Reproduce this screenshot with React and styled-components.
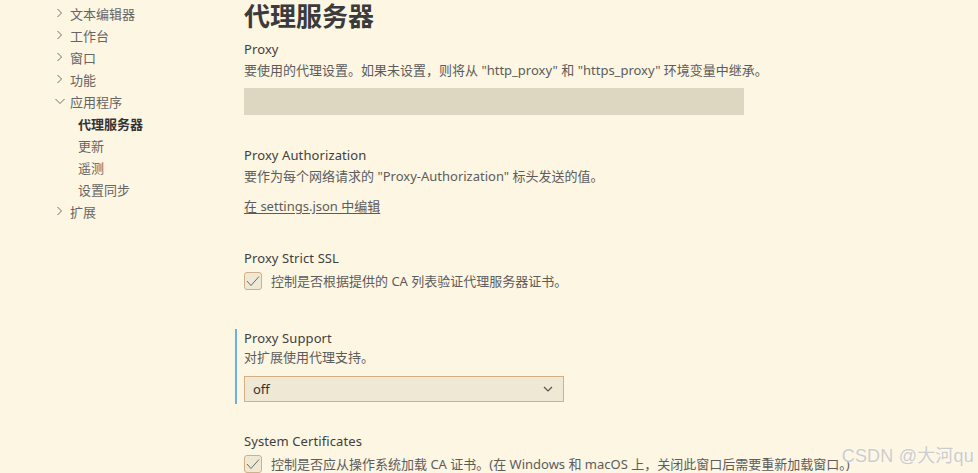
import React from 'react';
import styled, { createGlobalStyle } from 'styled-components';

const GlobalStyle = createGlobalStyle`
  html, body {
    margin: 0;
    padding: 0;
    background: #fdf6e3;
  }
  body {
    font-family: "Noto Sans", "Noto Sans CJK SC", sans-serif;
    font-size: 13px;
    color: #3f3f3f;
  }
`;

const Page = styled.div`
  position: relative;
  display: flex;
  width: 978px;
  height: 473px;
  overflow: hidden;
  background: #fdf6e3;
`;

const Sidebar = styled.nav`
  width: 235px;
  flex-shrink: 0;
  padding-top: 2px;
`;

const TreeRow = styled.div`
  display: flex;
  align-items: center;
  height: 22px;
  padding-left: ${p => (p.$child ? '78px' : '55px')};
  color: ${p => (p.$active ? '#333333' : '#656565')};
  font-weight: ${p => (p.$active ? 700 : 400)};
  font-size: 13px;
  white-space: nowrap;
`;

const Twistie = styled.svg`
  width: 10px;
  height: 10px;
  margin-right: 5px;
  flex-shrink: 0;
`;

const Main = styled.main`
  flex: 1;
  display: flex;
  flex-direction: column;
`;

const Heading = styled.h1`
  margin: 0;
  padding-left: 9px;
  font-size: 26px;
  line-height: 30px;
  font-weight: 700;
  color: #3b3b3b;
  font-family: "Noto Sans CJK SC", sans-serif;
`;

const Setting = styled.section`
  display: flex;
  flex-direction: column;
  align-items: flex-start;
  margin-top: ${p => p.$gap}px;
  padding: 0 0 ${p => (p.$focused ? 2 : 0)}px 7px;
  border-left: 2px solid ${p => (p.$focused ? '#6aafe6' : 'transparent')};
`;

const Label = styled.div`
  line-height: 18px;
  color: #3f3f3f;
  letter-spacing: 0.1px;
`;

const Description = styled.div`
  margin-top: ${p => p.$gap ?? 3}px;
  line-height: 18px;
  color: #5c5c5c;
  white-space: nowrap;
`;

const TextInput = styled.div`
  margin-top: 9px;
  width: 500px;
  height: 27px;
  background: #ddd6c1;
`;

const EditLink = styled.a`
  margin-top: 12px;
  line-height: 18px;
  color: #5c5c5c;
  text-decoration: underline;
  text-underline-offset: 2px;
  cursor: pointer;
`;

const CheckRow = styled.label`
  display: flex;
  align-items: center;
  gap: 9px;
  margin-top: 4px;
  color: #5c5c5c;
  white-space: nowrap;
`;

const CheckBox = styled.span`
  display: flex;
  align-items: center;
  justify-content: center;
  width: 16px;
  height: 16px;
  border: 1px solid #d3af86;
  border-radius: 3px;
  background: #eee8d5;
  flex-shrink: 0;
`;

const Select = styled.div`
  margin-top: 10px;
  display: flex;
  align-items: center;
  justify-content: space-between;
  box-sizing: border-box;
  width: 320px;
  height: 26px;
  padding: 0 10px 0 8px;
  border: 1px solid #d3af86;
  background: #eee8d5;
  color: #333333;
`;

const Watermark = styled.div`
  position: absolute;
  right: 4px;
  bottom: 6px;
  font-family: "Liberation Sans", "Noto Sans CJK SC", sans-serif;
  font-size: 18px;
  color: #cccccc;
  text-shadow: 0 0 2px #ffffff;
  letter-spacing: 0.2px;
`;

const ChevronRight = () => (
  <Twistie viewBox="0 0 10 10">
    <path d="M2.5 1 L6.5 5 L2.5 9" fill="none" stroke="#6f6f6f" strokeWidth="1" />
  </Twistie>
);

const ChevronDown = () => (
  <Twistie viewBox="0 0 10 10">
    <path d="M0.5 3 L5 7.5 L9.5 3" fill="none" stroke="#6f6f6f" strokeWidth="1" />
  </Twistie>
);

const Check = () => (
  <svg width="16" height="16" viewBox="0 0 16 16">
    <path d="M2 8 L6 12.5 L14 3.5" fill="none" stroke="#6b6b6b" strokeWidth="1" />
  </svg>
);

const tree = [
  { label: '文本编辑器', kind: 'closed' },
  { label: '工作台', kind: 'closed' },
  { label: '窗口', kind: 'closed' },
  { label: '功能', kind: 'closed' },
  { label: '应用程序', kind: 'open' },
  { label: '代理服务器', kind: 'child', active: true },
  { label: '更新', kind: 'child' },
  { label: '遥测', kind: 'child' },
  { label: '设置同步', kind: 'child' },
  { label: '扩展', kind: 'closed' }
];

const App = () => (
  <Page>
    <GlobalStyle />
    <Sidebar>
      {tree.map(item => (
        <TreeRow key={item.label} $child={item.kind === 'child'} $active={item.active}>
          {item.kind === 'closed' && <ChevronRight />}
          {item.kind === 'open' && <ChevronDown />}
          {item.label}
        </TreeRow>
      ))}
    </Sidebar>
    <Main>
      <Heading>代理服务器</Heading>

      <Setting $gap={10}>
        <Label>Proxy</Label>
        <Description>
          要使用的代理设置。如果未设置，则将从 "http_proxy" 和 "https_proxy" 环境变量中继承。
        </Description>
        <TextInput />
      </Setting>

      <Setting $gap={31}>
        <Label>Proxy Authorization</Label>
        <Description>要作为每个网络请求的 "Proxy-Authorization" 标头发送的值。</Description>
        <EditLink>在 settings.json 中编辑</EditLink>
      </Setting>

      <Setting $gap={34}>
        <Label>Proxy Strict SSL</Label>
        <CheckRow>
          <CheckBox><Check /></CheckBox>
          控制是否根据提供的 CA 列表验证代理服务器证书。
        </CheckRow>
      </Setting>

      <Setting $gap={39} $focused>
        <Label>Proxy Support</Label>
        <Description $gap={1}>对扩展使用代理支持。</Description>
        <Select>
          <span>off</span>
          <svg width="10" height="6" viewBox="0 0 10 6">
            <path d="M1 1 L5 5 L9 1" fill="none" stroke="#555" strokeWidth="1.2" />
          </svg>
        </Select>
      </Setting>

      <Setting $gap={28}>
        <Label>System Certificates</Label>
        <CheckRow>
          <CheckBox><Check /></CheckBox>
          控制是否应从操作系统加载 CA 证书。(在 Windows 和 macOS 上，关闭此窗口后需要重新加载窗口。)
        </CheckRow>
      </Setting>
    </Main>
    <Watermark>CSDN @大河qu</Watermark>
  </Page>
);

export default App;
